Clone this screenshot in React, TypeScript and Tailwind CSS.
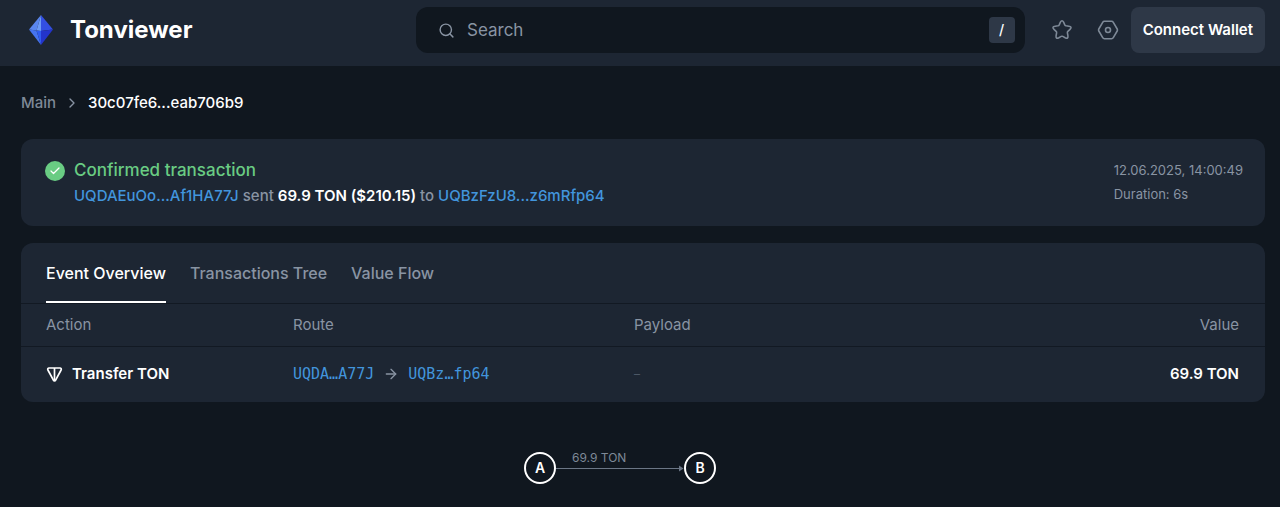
import React, { useState } from 'react';
import { ArrowRight, Check, ChevronRight, Search } from 'lucide-react';

// ── Data ──

const TABS = ['Event Overview', 'Transactions Tree', 'Value Flow'];

interface EventAction {
  action: string;
  from: string;
  to: string;
  payload: string;
  value: string;
}

const ACTIONS: EventAction[] = [
  { action: 'Transfer TON', from: 'UQDA…A77J', to: 'UQBz…fp64', payload: '–', value: '69.9 TON' },
];

// ── Icons ──

function LogoIcon() {
  return (
    <svg width="26" height="32" viewBox="0 0 26 32" aria-hidden="true">
      <path d="M13 1 L1 15.5 L8.5 16.5 Z" fill="#5a86ee" />
      <path d="M13 1 L8.5 16.5 L13 17 Z" fill="#6d9bf6" />
      <path d="M13 1 L25 15.5 L13 17 Z" fill="#334fe2" />
      <path d="M1 15.5 L8.5 16.5 L13 31 Z" fill="#4674f0" />
      <path d="M8.5 16.5 L13 17 L13 31 Z" fill="#2f5cf2" />
      <path d="M25 15.5 L13 17 L13 31 Z" fill="#2334cb" />
    </svg>
  );
}

function StarIcon() {
  return (
    <svg width="22" height="22" viewBox="-1 -1 22 22" fill="none" stroke="currentColor" strokeWidth="1.6" strokeLinejoin="round">
      <path d="M8.4 2.2Q10 -.6 11.6 2.2L12.8 4.8Q13.2 5.6 14.1 5.8L16.8 6.2Q20.6 6.8 18 9.3L15.9 11.3Q15.2 12 15.4 12.9L15.9 15.7Q16.4 19.3 13.2 17.7L10.8 16.4Q10 16 9.2 16.4L6.8 17.7Q3.6 19.3 4.1 15.7L4.6 12.9Q4.8 12 4.1 11.3L2 9.3Q-.6 6.8 3.2 6.2L5.9 5.8Q6.8 5.6 7.2 4.8Z" />
    </svg>
  );
}

function SettingsIcon() {
  return (
    <svg width="22" height="22" viewBox="0 0 22 22" fill="none" stroke="currentColor" strokeWidth="1.6">
      <path d="M7.4 2.3h7.2a2 2 0 0 1 1.7 1l3.9 6.7a2 2 0 0 1 0 2l-3.9 6.7a2 2 0 0 1-1.7 1H7.4a2 2 0 0 1-1.7-1L1.8 12a2 2 0 0 1 0-2l3.9-6.7a2 2 0 0 1 1.7-1z" />
      <circle cx="11" cy="11" r="2.5" />
    </svg>
  );
}

function TonIcon() {
  return (
    <svg width="17" height="17" viewBox="0 0 17 17" fill="none" stroke="currentColor" strokeWidth="1.7" strokeLinejoin="round" aria-hidden="true">
      <path d="M3 2h11a1.3 1.3 0 0 1 1.1 2L9.6 14.2a1.3 1.3 0 0 1-2.2 0L1.9 4A1.3 1.3 0 0 1 3 2z" />
      <path d="M8.5 2v12.5" />
    </svg>
  );
}

// ── Sections ──

function Header() {
  return (
    <header className="bg-[#1d2633] pt-[7px] pb-[13px] pl-7 pr-[15px] flex items-center">
      <a href="#" className="w-[388px] shrink-0 flex items-center gap-4 text-white">
        <LogoIcon />
        <span className="text-2xl font-bold">Tonviewer</span>
      </a>

      <label className="flex-1 h-[46px] flex items-center gap-3 rounded-xl bg-[#10171f] pl-[22px] pr-[10px]">
        <Search className="w-[17px] h-[17px] text-[#8994a3]" />
        <input
          type="text"
          aria-label="Search"
          placeholder="Search"
          className="flex-1 min-w-0 h-full bg-transparent text-[17px] text-white placeholder-[#8994a3] outline-none"
        />
        <kbd className="w-[26px] h-[26px] flex items-center justify-center rounded bg-[#2e3847] font-[Inter,sans-serif] text-sm font-medium text-white">
          /
        </kbd>
      </label>

      <div className="flex items-center gap-6 pl-[26px] pr-3 text-[#7e8997]">
        <button aria-label="Favorites">
          <StarIcon />
        </button>
        <button aria-label="Settings">
          <SettingsIcon />
        </button>
      </div>

      <button className="h-[46px] px-3 rounded-lg bg-[#2e3847] text-[15px] font-semibold text-white whitespace-nowrap">
        Connect Wallet
      </button>
    </header>
  );
}

function Summary() {
  return (
    <section className="mt-6 rounded-xl bg-[#1d2633] pl-6 pr-[22px] pt-[19px] pb-4 flex justify-between">
      <div className="flex gap-[9px]">
        <span className="mt-[3px] w-5 h-5 shrink-0 flex items-center justify-center rounded-full bg-[#69cc83] text-white">
          <Check className="w-3 h-3" strokeWidth={2.5} />
        </span>
        <div>
          <h1 className="text-[17px] leading-6 font-medium text-[#69cc83]">Confirmed transaction</h1>
          <p className="text-[15px] leading-7 font-medium text-[#8994a3]">
            <a href="#" className="text-[#4295dc]">UQDAEuOo...Af1HA77J</a> sent{' '}
            <span className="font-semibold text-white">69.9 TON ($210.15)</span> to{' '}
            <a href="#" className="text-[#4295dc]">UQBzFzU8...z6mRfp64</a>
          </p>
        </div>
      </div>
      <div className="text-[13px] leading-6 text-[#8994a3]">
        <div>12.06.2025, 14:00:49</div>
        <div>Duration: 6s</div>
      </div>
    </section>
  );
}

function Events() {
  const [activeTab, setActiveTab] = useState(TABS[0]);

  return (
    <section className="mt-[17px] rounded-xl bg-[#1d2633]">
      <div role="tablist" className="flex gap-6 px-[25px] border-b border-[#121923]">
        {TABS.map((tab) => (
          <button
            key={tab}
            role="tab"
            aria-selected={activeTab === tab}
            className={`h-[60px] pt-0.5 border-b-2 text-base font-medium ${activeTab === tab ? 'border-white text-white' : 'border-transparent text-[#8994a3]'}`}
            onClick={() => setActiveTab(tab)}
          >
            {tab}
          </button>
        ))}
      </div>

      <table className="w-full table-fixed text-left text-[15px]">
        <thead>
          <tr className="h-[42px] border-b border-[#121923] text-[#8994a3]">
            <th className="w-[272px] pl-[25px] font-normal">Action</th>
            <th className="w-[341px] font-normal">Route</th>
            <th className="font-normal">Payload</th>
            <th className="pr-[26px] text-right font-normal">Value</th>
          </tr>
        </thead>
        <tbody>
          {ACTIONS.map((row) => (
            <tr key={`${row.from}:${row.to}`} className="h-14">
              <td className="pl-[25px]">
                <div className="flex items-center gap-[9px] font-semibold text-white">
                  <TonIcon />
                  {row.action}
                </div>
              </td>
              <td>
                <div className="flex items-center gap-[9px] font-['DejaVu_Sans_Mono',monospace] text-[#4295dc]">
                  <a href="#">{row.from}</a>
                  <ArrowRight className="w-4 h-4 text-[#8994a3]" />
                  <a href="#">{row.to}</a>
                </div>
              </td>
              <td className="text-xs text-[#4c5766]">{row.payload}</td>
              <td className="pr-[26px] text-right font-semibold text-white">{row.value}</td>
            </tr>
          ))}
        </tbody>
      </table>
    </section>
  );
}

function GraphNode({ label }: { label: string }) {
  return (
    <div className="w-8 h-8 flex items-center justify-center rounded-full border-2 border-white text-sm font-semibold text-white">
      {label}
    </div>
  );
}

function TransferGraph() {
  return (
    <div className="mt-[50px] pb-5 pr-[46px] flex items-center justify-center">
      <GraphNode label="A" />
      <div className="relative w-32 text-[#6b7685]">
        <span className="absolute left-4 bottom-1 text-xs leading-5 text-[#7e8997]">69.9 TON</span>
        <svg width="128" height="8" viewBox="0 0 128 8" className="block" aria-hidden="true">
          <path d="M0 4.5h124" stroke="currentColor" />
          <path d="M123 1.5l4.5 3-4.5 3z" fill="currentColor" />
        </svg>
      </div>
      <GraphNode label="B" />
    </div>
  );
}

// ── Page ──

export default function App() {
  return (
    <div className="min-h-screen bg-[#10171f] font-[Inter,sans-serif]">
      <Header />
      <main className="pl-[21px] pr-[15px] pt-[25px]">
        <nav className="flex items-center gap-2 text-[15px] leading-6 font-medium">
          <a href="#" className="text-[#7e8997]">Main</a>
          <ChevronRight className="w-4 h-4 text-[#8994a3]" />
          <span className="text-white">30c07fe6...eab706b9</span>
        </nav>
        <Summary />
        <Events />
        <TransferGraph />
      </main>
    </div>
  );
}
